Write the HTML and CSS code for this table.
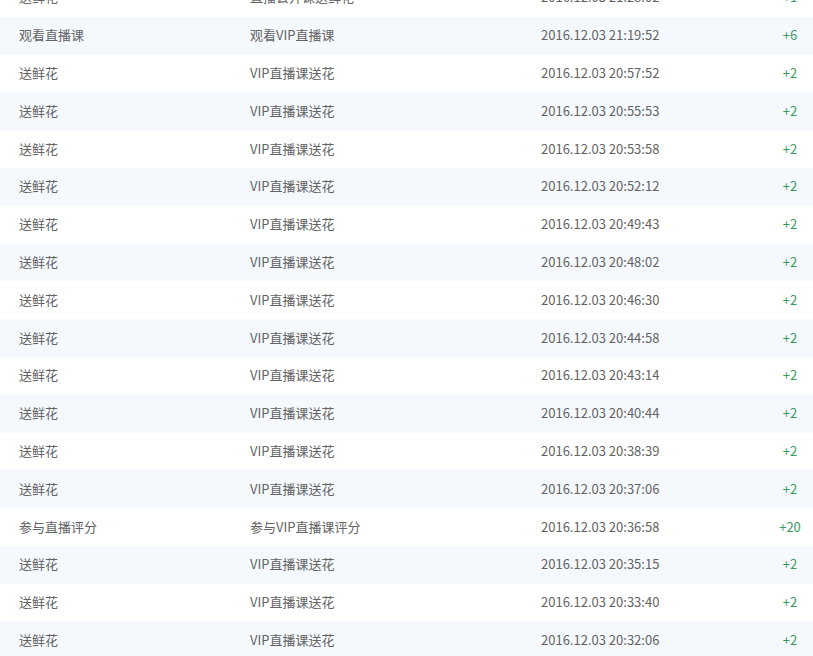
FILE: index.html
```html
<!DOCTYPE html>
<html lang="zh-CN">
<head>
  <meta charset="UTF-8" />
  <title>积分记录</title>
  <link rel="stylesheet" href="styles.css">
</head>
<body>
  <div class="records">
    <div class="row"><span>送鲜花</span><span>直播公开课送鲜花</span><span>2016.12.03 21:28:02</span><span class="pts">+1</span></div>
    <div class="row"><span>观看直播课</span><span>观看VIP直播课</span><span>2016.12.03 21:19:52</span><span class="pts">+6</span></div>
    <div class="row"><span>送鲜花</span><span>VIP直播课送花</span><span>2016.12.03 20:57:52</span><span class="pts">+2</span></div>
    <div class="row"><span>送鲜花</span><span>VIP直播课送花</span><span>2016.12.03 20:55:53</span><span class="pts">+2</span></div>
    <div class="row"><span>送鲜花</span><span>VIP直播课送花</span><span>2016.12.03 20:53:58</span><span class="pts">+2</span></div>
    <div class="row"><span>送鲜花</span><span>VIP直播课送花</span><span>2016.12.03 20:52:12</span><span class="pts">+2</span></div>
    <div class="row"><span>送鲜花</span><span>VIP直播课送花</span><span>2016.12.03 20:49:43</span><span class="pts">+2</span></div>
    <div class="row"><span>送鲜花</span><span>VIP直播课送花</span><span>2016.12.03 20:48:02</span><span class="pts">+2</span></div>
    <div class="row"><span>送鲜花</span><span>VIP直播课送花</span><span>2016.12.03 20:46:30</span><span class="pts">+2</span></div>
    <div class="row"><span>送鲜花</span><span>VIP直播课送花</span><span>2016.12.03 20:44:58</span><span class="pts">+2</span></div>
    <div class="row"><span>送鲜花</span><span>VIP直播课送花</span><span>2016.12.03 20:43:14</span><span class="pts">+2</span></div>
    <div class="row"><span>送鲜花</span><span>VIP直播课送花</span><span>2016.12.03 20:40:44</span><span class="pts">+2</span></div>
    <div class="row"><span>送鲜花</span><span>VIP直播课送花</span><span>2016.12.03 20:38:39</span><span class="pts">+2</span></div>
    <div class="row"><span>送鲜花</span><span>VIP直播课送花</span><span>2016.12.03 20:37:06</span><span class="pts">+2</span></div>
    <div class="row"><span>参与直播评分</span><span>参与VIP直播课评分</span><span>2016.12.03 20:36:58</span><span class="pts">+20</span></div>
    <div class="row"><span>送鲜花</span><span>VIP直播课送花</span><span>2016.12.03 20:35:15</span><span class="pts">+2</span></div>
    <div class="row"><span>送鲜花</span><span>VIP直播课送花</span><span>2016.12.03 20:33:40</span><span class="pts">+2</span></div>
    <div class="row"><span>送鲜花</span><span>VIP直播课送花</span><span>2016.12.03 20:32:06</span><span class="pts">+2</span></div>
  </div>
</body>
</html>
```
FILE: styles.css
```css
* { margin: 0; padding: 0; box-sizing: border-box; }

body {
  background: #fff;
  font-family: "Noto Sans CJK SC", "Noto Sans", sans-serif;
  font-size: 13px;
  color: #636363;
  overflow: hidden;
}

.records { margin-top: -21px; }

.row {
  display: grid;
  grid-template-columns: 231px 291px 1fr 46px;
  align-items: center;
  height: 37.8px;
  padding: 0 0 2px 19px;
}

.row:nth-child(even) { background: #f5f9fd; }

.pts {
  text-align: center;
  color: #3a9a60;
}
```
